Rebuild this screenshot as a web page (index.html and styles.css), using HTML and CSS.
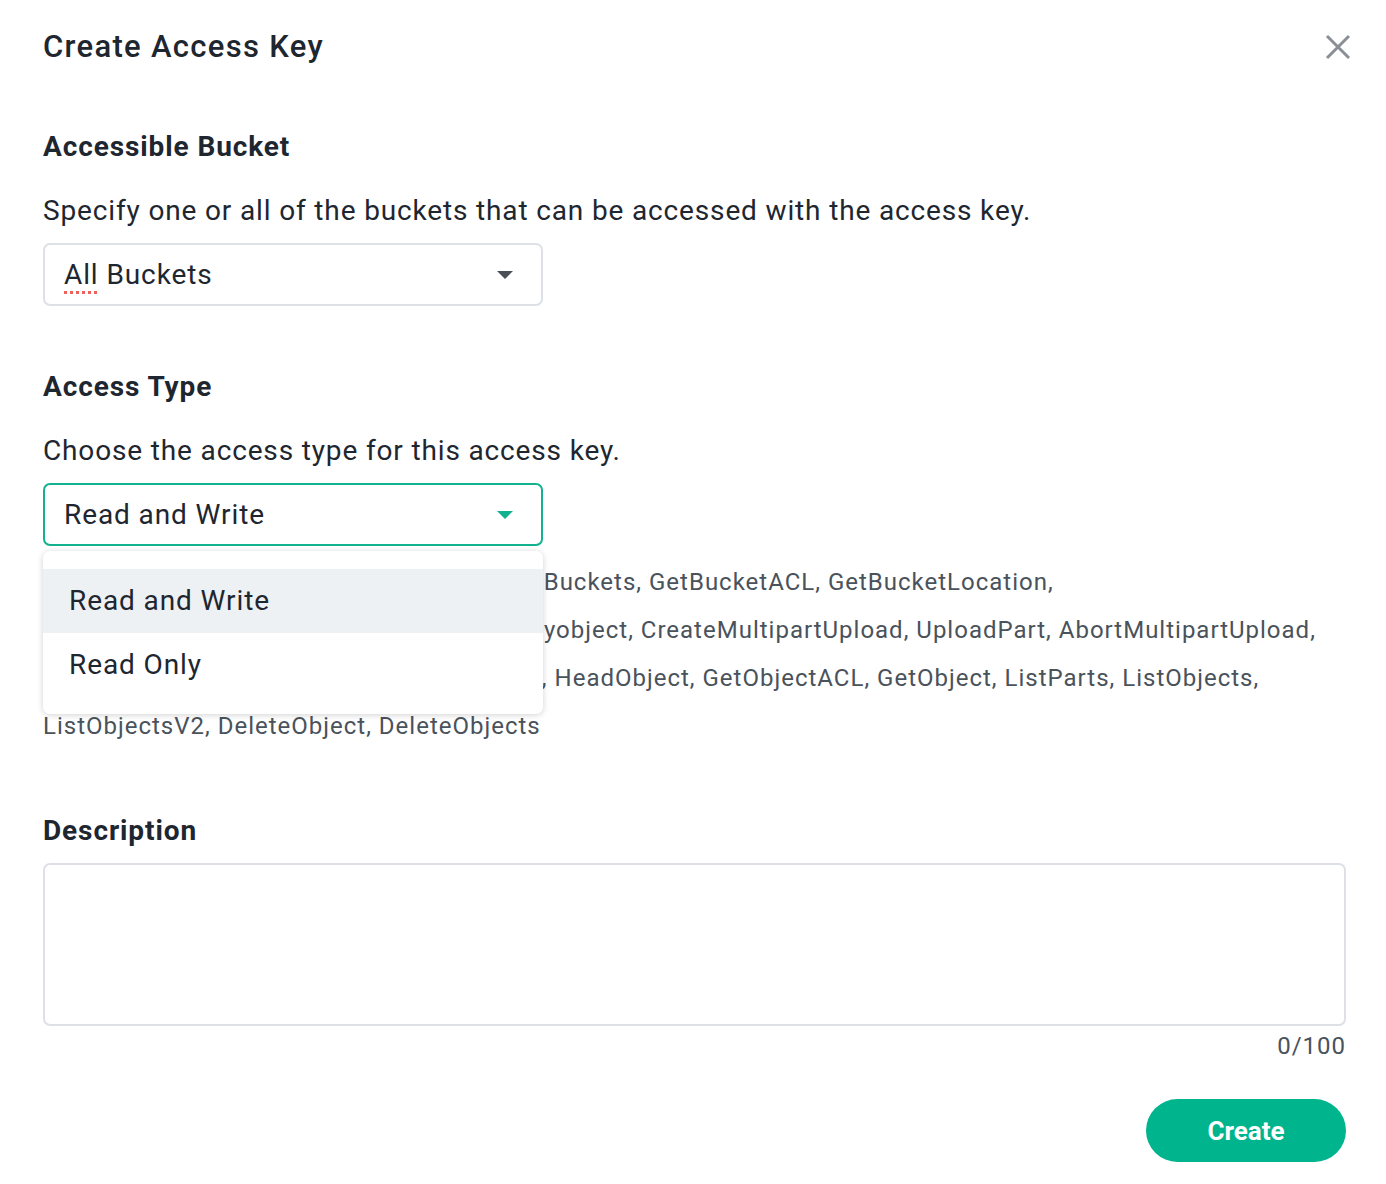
FILE: index.html
```html
<!DOCTYPE html>
<html>
  <head>
    <meta charset="utf-8">
    <title>Create Access Key</title>
    <link rel="stylesheet" href="styles.css">
  </head>
  <body>
    <div class="dialog">
      <div class="head">
        <h1 class="title">Create Access Key</h1>
        <span class="close">
          <svg width="28" height="28" viewBox="0 0 28 28"><path d="M3 3L25 25M25 3L3 25" stroke="#8a8f96" stroke-width="3" fill="none"/></svg>
        </span>
      </div>

      <div class="field first">
        <h2 class="label">Accessible Bucket</h2>
        <p class="hint">Specify one or all of the buckets that can be accessed with the access key.</p>
        <div class="select">
          <span><span class="spell">All</span> Buckets</span>
          <svg class="arrow" width="16" height="8" viewBox="0 0 16 8"><path d="M0 0H16L8 8Z" fill="#4a5058"/></svg>
        </div>
      </div>

      <div class="field">
        <h2 class="label">Access Type</h2>
        <p class="hint">Choose the access type for this access key.</p>
        <div class="select-wrap">
          <div class="select open">
            <span>Read and Write</span>
            <svg class="arrow" width="16" height="8" viewBox="0 0 16 8"><path d="M0 0H16L8 8Z" fill="#12b18f"/></svg>
          </div>
          <ul class="menu">
            <li class="active">Read and Write</li>
            <li>Read Only</li>
          </ul>
        </div>
        <!-- the list wraps like this behind the open menu -->
        <p class="ops">Permitted API operations: HeadBucket, ListBuckets, GetBucketACL, GetBucketLocation,<br>
          ListMultipartUploads, UploadPartCopy, Copyobject, CreateMultipartUpload, UploadPart, AbortMultipartUpload,<br>
          CompleteMultipartUpload, PostObjectACLs, HeadObject, GetObjectACL, GetObject, ListParts, ListObjects,<br>
          ListObjectsV2, DeleteObject, DeleteObjects</p>
      </div>

      <div class="field">
        <h2 class="label">Description</h2>
        <div class="textarea"></div>
        <div class="count">0/100</div>
      </div>

      <div class="foot">
        <button class="btn">Create</button>
      </div>
    </div>
  </body>
</html>
```

FILE: styles.css
```css
*{
  margin: 0;
  padding: 0;
  box-sizing: border-box;
}
body{
  background: #fff;
  font-family: Roboto, "Liberation Sans", sans-serif;
  color: #1e2630;
}
.dialog{
  padding: 27px 40px 0 43px;
}
.head{
  display: flex;
  justify-content: space-between;
  align-items: center;
  height: 40px;
}
.title{
  font-size: 31px;
  font-weight: 500;
  line-height: 40px;
  letter-spacing: 1.3px;
}
.close{
  display: flex;
  margin-right: -6px;
}
.field{
  margin-top: 63px;
}
.field.first{
  margin-top: 62px;
}
.label{
  font-size: 28px;
  font-weight: 700;
  line-height: 36px;
  letter-spacing: .9px;
}
.hint{
  font-size: 28px;
  line-height: 36px;
  margin-top: 28px;
  letter-spacing: .85px;
}
.select{
  margin-top: 14px;
  width: 500px;
  height: 63px;
  border: 2px solid #dde1e6;
  border-radius: 7px;
  display: flex;
  align-items: center;
  justify-content: space-between;
  padding: 0 28px 0 19px;
  font-size: 28px;
  letter-spacing: .9px;
}
.spell{
  text-decoration: underline dotted #f0605c;
  text-decoration-thickness: 3px;
  text-underline-offset: 7px;
}
.select.open{
  border-color: #12b18f;
}
.select-wrap{
  position: relative;
}
.menu{
  position: absolute;
  left: 0;
  top: 68px;
  width: 500px;
  list-style: none;
  background: #fff;
  border-radius: 7px;
  box-shadow: 0 1px 6px rgba(0,0,0,.18);
  padding: 18px 0 17px;
  z-index: 2;
}
.menu li{
  height: 64px;
  line-height: 64px;
  padding-left: 26px;
  font-size: 28px;
  letter-spacing: .9px;
}
.menu li.active{
  background: #eef1f4;
}
.ops{
  margin-top: 12px;
  font-size: 24px;
  line-height: 48px;
  letter-spacing: 1px;
  color: #4a525b;
}
.field .label + .textarea{
  margin-top: 14px;
}
.textarea{
  height: 163px;
  border: 2px solid #dde1e6;
  border-radius: 7px;
}
.count{
  text-align: right;
  font-size: 24px;
  line-height: 28px;
  letter-spacing: 1px;
  color: #4a525b;
  margin-top: 6px;
}
.foot{
  display: flex;
  justify-content: flex-end;
  margin-top: 39px;
}
.btn{
  width: 200px;
  height: 63px;
  border: none;
  border-radius: 32px;
  background: #00b48e;
  color: #fff;
  font-family: Roboto, "Liberation Sans", sans-serif;
  font-size: 26px;
  font-weight: 700;
}
```
